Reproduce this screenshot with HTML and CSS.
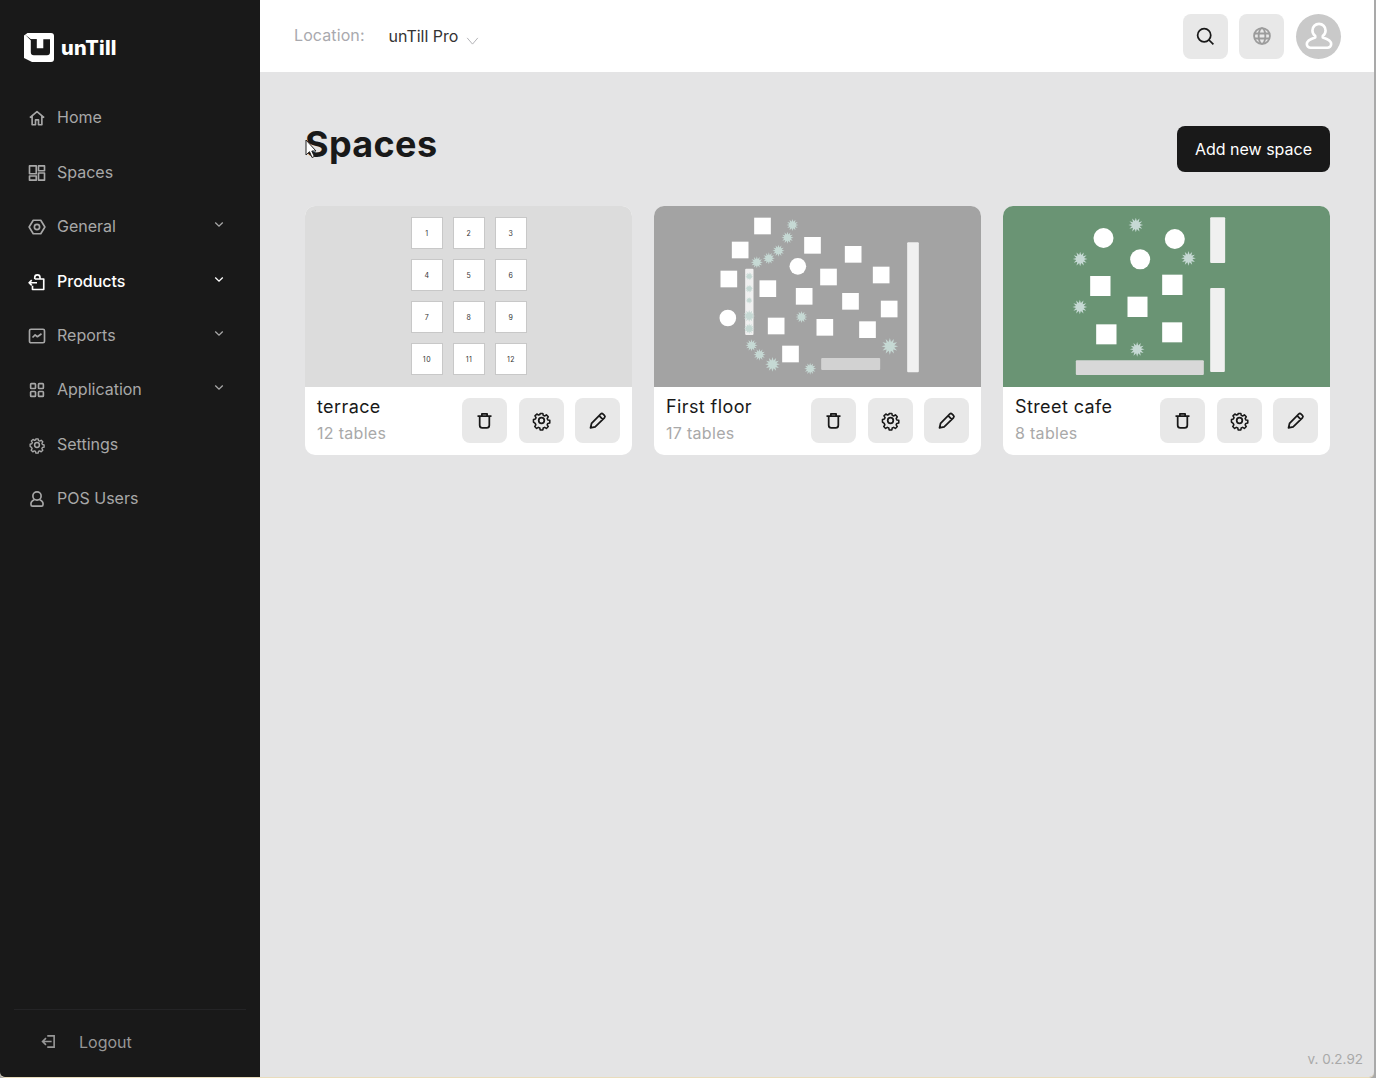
FILE: index.html
```html
<!DOCTYPE html>
<html lang="en">
<head>
<meta charset="utf-8">
<title>Spaces</title>
<link rel="stylesheet" href="styles.css">
</head>
<body>
<svg class="defs" width="0" height="0" aria-hidden="true">
  <symbol id="plant" viewBox="-10 -10 20 20" overflow="visible">
    <polygon fill="#c6d9d4" points="10,0 5.3,1.4 8.7,5 3.9,3.9 5,8.7 1.4,5.3 0,10 -1.4,5.3 -5,8.7 -3.9,3.9 -8.7,5 -5.3,1.4 -10,0 -5.3,-1.4 -8.7,-5 -3.9,-3.9 -5,-8.7 -1.4,-5.3 0,-10 1.4,-5.3 5,-8.7 3.9,-3.9 8.7,-5 5.3,-1.4"/>
  </symbol>
  <symbol id="i-trash" viewBox="0 0 24 24"><path d="M4 7h16M9 7V4.500h6V7M6.500 7v10.500a3 3 0 0 0 3 3h5a3 3 0 0 0 3-3V7" fill="none" stroke="currentColor" stroke-width="2" stroke-linejoin="round"/></symbol>
  <symbol id="i-gear" viewBox="0 0 24 24"><path d="M10.300 3h3.400l.5 2.500 1.800.8 2.200-1.400 2.400 2.400-1.400 2.200.8 1.800 2.500.5v3.400l-2.500.5-.8 1.800 1.400 2.200-2.400 2.400-2.200-1.400-1.800.8-.5 2.500h-3.400l-.5-2.500-1.800-.8-2.200 1.400-2.400-2.400 1.400-2.200-.8-1.800L1.800 14v-3.400l2.500-.5.8-1.800-1.400-2.200 2.400-2.400 2.200 1.400 1.800-.8z" transform="translate(12 12) scale(.9) translate(-12 -12)" fill="none" stroke="currentColor" stroke-width="2" stroke-linejoin="round"/><circle cx="12" cy="12" r="3.200" fill="none" stroke="currentColor" stroke-width="2"/></symbol>
  <symbol id="i-pen" viewBox="0 0 24 24"><path d="M4 20.500l1.200-5.200L15.600 4.600a2 2 0 0 1 2.800 0l1.500 1.500a2 2 0 0 1 0 2.800L9.300 19.400zM13.800 6.500l4.200 4.200" fill="none" stroke="currentColor" stroke-width="2" stroke-linejoin="round"/></symbol>
</svg>
<div class="app">
  <aside class="sidebar">
    <div class="logo">
      <svg class="logo-mark" viewBox="0 0 30 29" aria-hidden="true">
        <path fill="#fff" d="M3.500 0H27a3 3 0 0 1 3 3v23a3 3 0 0 1-3 3H8L0 25V2.500z"/>
        <path fill="#191919" d="M1 1.500L7 6.200h5.500v1H6.700z"/>
        <path fill="#191919" d="M6.800 6.300h6v9h6.500v-9H26v13a3 3 0 0 1-3 3H9.800a3 3 0 0 1-3-3z"/>
      </svg>
      <span class="logo-text">unTill</span>
    </div>
    <nav class="nav">
      <a class="nav-item">
        <svg class="nav-icon" viewBox="0 0 24 24"><path d="M2.500 11.500L12 3.500l9.500 8M5.500 9.500V21h4.500v-6.500h4V21h4.500V9.500"/></svg>
        <span>Home</span>
      </a>
      <a class="nav-item">
        <svg class="nav-icon" viewBox="0 0 24 24"><rect x="2" y="2.500" width="9" height="10.500"/><rect x="14" y="2.500" width="8" height="6.500"/><rect x="2" y="16" width="9" height="5.500"/><rect x="14" y="12" width="8" height="9.500"/></svg>
        <span>Spaces</span>
      </a>
      <a class="nav-item">
        <svg class="nav-icon" viewBox="0 0 24 24"><path d="M7 3h10l5.500 9-5.500 9H7l-5.500-9z"/><circle cx="12" cy="12" r="3.500"/></svg>
        <span>General</span>
        <svg class="nav-chev" viewBox="0 0 12 8"><path d="M1.500 1.500L6 6l4.500-4.500"/></svg>
      </a>
      <a class="nav-item is-active">
        <svg class="nav-icon" viewBox="0 0 24 24"><path d="M9 8V6a3.500 3.500 0 0 1 7 0v2M9 8h12v14H6v-5M1.500 13H12M5 9.500L1.500 13 5 16.500"/></svg>
        <span>Products</span>
        <svg class="nav-chev" viewBox="0 0 12 8"><path d="M1.500 1.500L6 6l4.500-4.500"/></svg>
      </a>
      <a class="nav-item">
        <svg class="nav-icon" viewBox="0 0 24 24"><rect x="2" y="3" width="20" height="18" rx="2"/><path d="M6 14l3.500-3.500 3 2.500L18 9"/></svg>
        <span>Reports</span>
        <svg class="nav-chev" viewBox="0 0 12 8"><path d="M1.500 1.500L6 6l4.500-4.500"/></svg>
      </a>
      <a class="nav-item">
        <svg class="nav-icon" viewBox="0 0 24 24"><rect x="3.500" y="3.500" width="6.500" height="6.500" rx="1"/><rect x="14" y="3.500" width="6.500" height="6.500" rx="1"/><rect x="3.500" y="14" width="6.500" height="6.500" rx="1"/><rect x="14" y="14" width="6.500" height="6.500" rx="1"/></svg>
        <span>Application</span>
        <svg class="nav-chev" viewBox="0 0 12 8"><path d="M1.500 1.500L6 6l4.500-4.500"/></svg>
      </a>
      <a class="nav-item">
        <svg class="nav-icon" viewBox="0 0 24 24"><use href="#i-gear"/></svg>
        <span>Settings</span>
      </a>
      <a class="nav-item">
        <svg class="nav-icon" viewBox="0 0 24 24"><circle cx="12" cy="8" r="5.500"/><path d="M8.500 13C5 14.500 3.500 17 4 19.500a2 2 0 0 0 2 2h12a2 2 0 0 0 2-2c.5-2.500-1-5-4.500-6.500"/></svg>
        <span>POS Users</span>
      </a>
    </nav>
    <div class="logout">
      <svg class="logout-icon" viewBox="0 0 24 24"><path d="M10 3h11v18H10M17 12H3M8 6.500L2.500 12 8 17.500"/></svg>
      <span>Logout</span>
    </div>
  </aside>
  <div class="content">
    <header class="topbar">
      <span class="loc-label">Location:</span>
      <span class="loc-value">unTill Pro</span>
      <svg class="loc-chev" viewBox="0 0 14 9"><path d="M1 1l6 7 6-7"/></svg>
      <button class="icon-btn search-btn" aria-label="Search">
        <svg viewBox="0 0 24 24"><circle cx="10.500" cy="10.500" r="7.500"/><path d="M16 16l5 5"/></svg>
      </button>
      <button class="icon-btn globe-btn" aria-label="Language">
        <svg viewBox="0 0 24 24"><circle cx="12" cy="12" r="9.500"/><ellipse cx="12" cy="12" rx="4" ry="9.500"/><path d="M3 9h18M3 15h18"/></svg>
      </button>
      <div class="avatar">
        <svg viewBox="0 0 32 32"><path d="M16 3a7 7 0 0 1 7 7c0 2.500-1.200 4.500-3 6v1.500c4 1.200 9 3.500 9 7 0 2.500-2 4-4 4H7c-2 0-4-1.500-4-4 0-3.500 5-5.800 9-7V16c-1.800-1.500-3-3.500-3-6a7 7 0 0 1 7-7z"/></svg>
      </div>
    </header>
    <main class="main">
      <div class="page-head">
        <h1 class="page-title">Spaces</h1>
        <button class="add-btn">Add new space</button>
      </div>
      <div class="cards">
        <article class="card">
          <div class="plan plan-terrace">
            <div class="table-grid">
              <span class="tbl">1</span><span class="tbl">2</span><span class="tbl">3</span>
              <span class="tbl">4</span><span class="tbl">5</span><span class="tbl">6</span>
              <span class="tbl">7</span><span class="tbl">8</span><span class="tbl">9</span>
              <span class="tbl">10</span><span class="tbl">11</span><span class="tbl">12</span>
            </div>
          </div>
          <div class="card-foot">
            <div class="card-info"><div class="card-name">terrace</div><div class="card-sub">12 tables</div></div>
            <button class="act" aria-label="Delete"><svg><use href="#i-trash"/></svg></button>
            <button class="act" aria-label="Settings"><svg><use href="#i-gear"/></svg></button>
            <button class="act" aria-label="Edit"><svg><use href="#i-pen"/></svg></button>
          </div>
        </article>
        <article class="card">
          <div class="plan plan-first">
            <svg class="plan-svg" viewBox="13 17 980 543">
              <g fill="#fff">
                <rect x="313" y="52" width="50" height="50"/><rect x="246" y="124" width="50" height="50"/><rect x="212" y="211" width="50" height="50"/><rect x="463" y="110" width="50" height="50"/><rect x="585" y="137" width="50" height="50"/><rect x="669" y="199" width="50" height="50"/><rect x="511" y="205" width="50" height="50"/><rect x="329" y="240" width="50" height="50"/><rect x="438" y="263" width="50" height="50"/><rect x="577" y="278" width="50" height="50"/><rect x="693" y="301" width="50" height="50"/><rect x="354" y="352" width="50" height="50"/><rect x="500" y="356" width="50" height="50"/><rect x="628" y="363" width="50" height="50"/><rect x="397" y="436" width="50" height="50"/>
                <circle cx="444" cy="198" r="25"/><circle cx="234" cy="353" r="25"/>
              </g>
              <rect x="772" y="126" width="35" height="390" rx="3" fill="#f0f0f0"/>
              <rect x="514" y="473" width="177" height="36" rx="3" fill="#d2d2d2"/>
              <rect x="286" y="205" width="25" height="199" rx="3" fill="#f0f0f0"/>
              <use href="#plant" x="410" y="56" width="36" height="36"/><use href="#plant" x="395" y="94" width="36" height="36"/><use href="#plant" x="368" y="133" width="36" height="36"/><use href="#plant" x="339" y="156" width="36" height="36"/><use href="#plant" x="303" y="168" width="36" height="36"/><use href="#plant" x="286" y="216" width="24" height="24"/><use href="#plant" x="286" y="253" width="24" height="24"/><use href="#plant" x="288" y="290" width="20" height="20"/><use href="#plant" x="280" y="329" width="36" height="36"/><use href="#plant" x="282" y="369" width="32" height="32"/><use href="#plant" x="287" y="417" width="36" height="36"/><use href="#plant" x="311" y="445" width="36" height="36"/><use href="#plant" x="346" y="470" width="44" height="44"/><use href="#plant" x="463" y="487" width="36" height="36"/><use href="#plant" x="437" y="332" width="36" height="36"/><use href="#plant" x="695" y="413" width="50" height="50"/>
            </svg>
          </div>
          <div class="card-foot">
            <div class="card-info"><div class="card-name">First floor</div><div class="card-sub">17 tables</div></div>
            <button class="act" aria-label="Delete"><svg><use href="#i-trash"/></svg></button>
            <button class="act" aria-label="Settings"><svg><use href="#i-gear"/></svg></button>
            <button class="act" aria-label="Edit"><svg><use href="#i-pen"/></svg></button>
          </div>
        </article>
        <article class="card">
          <div class="plan plan-street">
            <svg class="plan-svg" viewBox="10 17 980 543">
              <g fill="#fff">
                <circle cx="311" cy="113" r="30"/><circle cx="525" cy="116" r="30"/><circle cx="421" cy="177" r="30"/>
                <rect x="271" y="227" width="61" height="60"/><rect x="487" y="223" width="61" height="61"/><rect x="383" y="289" width="60" height="61"/><rect x="289" y="372" width="61" height="60"/><rect x="487" y="366" width="60" height="60"/>
              </g>
              <rect x="631" y="51" width="45" height="137" rx="3" fill="#f0f0f0"/>
              <rect x="631" y="263" width="44" height="252" rx="3" fill="#f0f0f0"/>
              <rect x="228" y="480" width="384" height="44" rx="3" fill="#d8d8d8"/>
              <use href="#plant" x="386" y="52" width="44" height="44"/><use href="#plant" x="219" y="154" width="44" height="44"/><use href="#plant" x="544" y="152" width="44" height="44"/><use href="#plant" x="218" y="298" width="44" height="44"/><use href="#plant" x="390" y="425" width="44" height="44"/>
            </svg>
          </div>
          <div class="card-foot">
            <div class="card-info"><div class="card-name">Street cafe</div><div class="card-sub">8 tables</div></div>
            <button class="act" aria-label="Delete"><svg><use href="#i-trash"/></svg></button>
            <button class="act" aria-label="Settings"><svg><use href="#i-gear"/></svg></button>
            <button class="act" aria-label="Edit"><svg><use href="#i-pen"/></svg></button>
          </div>
        </article>
      </div>
      <span class="version">v. 0.2.92</span>
      <svg class="cursor" viewBox="0 0 12 20" aria-hidden="true"><path d="M1 1v15l3.500-3.300 2.500 5.800 2.300-1-2.500-5.500H11z" fill="#fff" stroke="#222" stroke-width="1"/></svg>
    </main>
  </div>
</div>
</body>
</html>
```
FILE: styles.css
```css
* { box-sizing: border-box; }
html, body { height: 100%; }
body {
  margin: 0;
  background: #a9a9a9;
  font-family: Inter, "Liberation Sans", sans-serif;
  color: #191919;
  overflow: hidden;
}
.defs { position: absolute; }
.app {
  display: flex;
  width: 1374px;
  height: 1077px;
  border-radius: 0 0 5px 5px;
  overflow: hidden;
  box-shadow: 0 1px 0 #e9dcbc;
}
.sidebar {
  width: 260px;
  flex: none;
  background: #191919;
  display: flex;
  flex-direction: column;
  color: #a8a8a8;
}
.logo {
  display: flex;
  align-items: center;
  gap: 7px;
  height: 64px;
  margin-top: 15px;
  padding-left: 24px;
}
.logo-mark { width: 30px; height: 29px; flex: none; }
.logo-text {
  font-size: 20px;
  font-weight: 800;
  color: #fff;
  letter-spacing: 0.2px;
  margin-top: 2px;
}
.nav { display: flex; flex-direction: column; margin-top: 11.2px; }
.nav-item {
  display: flex;
  align-items: center;
  height: 54.4px;
  padding: 0 36px 0 28px;
  font-size: 16px;
  color: #a8a8a8;
}
.nav-item span { flex: 1; margin-left: 11px; }
.nav-item.is-active { color: #fff; font-weight: 500; }
.nav-icon {
  width: 18px;
  height: 18px;
  flex: none;
  fill: none;
  stroke: currentColor;
  stroke-width: 2.2;
  stroke-linejoin: round;
  margin-top: 2px;
}
.nav-chev {
  width: 10px;
  height: 7px;
  flex: none;
  fill: none;
  stroke: currentColor;
  stroke-width: 1.6;
  margin-top: -3px;
}
.logout {
  margin: auto 14px 0;
  height: 68px;
  border-top: 1px solid #242426;
  display: flex;
  align-items: center;
  padding: 0 0 4px 27px;
  gap: 23px;
  font-size: 16px;
  color: #979797;
}
.logout-icon {
  width: 15px;
  height: 15px;
  fill: none;
  stroke: currentColor;
  stroke-width: 2.6;
}
.content {
  flex: 1;
  display: flex;
  flex-direction: column;
  min-width: 0;
  background: #e4e4e5;
}
.topbar {
  height: 72px;
  flex: none;
  background: #fff;
  display: flex;
  align-items: center;
  padding: 0 33px 0 34px;
}
.loc-label { font-size: 16px; color: #a9a9ae; margin-top: -2px; letter-spacing: 0.1px; }
.loc-value { font-size: 16px; color: #333; margin-left: 24px; }
.loc-chev {
  width: 13px;
  height: 8px;
  fill: none;
  stroke: #a9a9ae;
  stroke-width: 1;
  margin: 9px auto 0 8px;
}
.icon-btn {
  width: 45px;
  height: 45px;
  border: 0;
  border-radius: 8px;
  background: #e8e8e8;
  padding: 0;
  display: flex;
  align-items: center;
  justify-content: center;
}
.search-btn { margin-right: 11px; }
.globe-btn { margin-right: 12px; }
.icon-btn svg { width: 20px; height: 20px; fill: none; stroke-width: 2; }
.search-btn svg { stroke: #191919; width: 21px; height: 21px; }
.globe-btn svg { stroke: #9c9c9c; stroke-width: 2.2; }
.avatar {
  width: 45px;
  height: 45px;
  border-radius: 50%;
  background: #c9c9c9;
  display: flex;
  align-items: center;
  justify-content: center;
}
.avatar svg { width: 30px; height: 30px; fill: none; stroke: #fff; stroke-width: 2.8; stroke-linejoin: round; }
.main {
  position: relative;
  flex: 1;
  padding: 54px 44px 0 45px;
}
.page-head {
  display: flex;
  align-items: flex-start;
  justify-content: space-between;
  height: 80px;
}
.page-title {
  margin: -1px 0 0;
  font-size: 36px;
  line-height: 38px;
  font-weight: 700;
  letter-spacing: 0.35px;
}
.add-btn {
  width: 153px;
  height: 46px;
  border: 0;
  border-radius: 8px;
  background: #191919;
  color: #fff;
  font: 400 16px Inter, "Liberation Sans", sans-serif;
}
.cards {
  display: grid;
  grid-template-columns: repeat(3, 327px);
  gap: 22px;
}
.card {
  height: 249px;
  border-radius: 10px;
  background: #fff;
  overflow: hidden;
}
.plan { height: 181px; }
.plan-terrace { background: #dcdcdc; padding: 11px 0 0 106px; }
.plan-first { background: #a3a3a3; }
.plan-street { background: #6a9474; }
.plan-svg { display: block; width: 327px; height: 181px; }
.table-grid {
  display: grid;
  grid-template-columns: repeat(3, 32px);
  grid-auto-rows: 32px;
  gap: 10px;
}
.tbl {
  display: flex;
  align-items: center;
  justify-content: center;
  background: #fff;
  border: 1px solid #c8c8c8;
  font-size: 7px;
  letter-spacing: 0.5px;
  color: #333;
}
.card-foot {
  display: flex;
  align-items: center;
  gap: 11.5px;
  height: 68px;
  padding: 0 12px 1px;
}
.card-info { flex: 1; min-width: 0; margin-top: -3px; }
.card-name { font-size: 18px; line-height: 24px; letter-spacing: 0.4px; color: #191919; }
.card-sub { font-size: 16px; line-height: 22px; letter-spacing: 0.3px; color: #a9a9a9; margin-top: 3px; }
.act {
  width: 45px;
  height: 45px;
  border: 0;
  border-radius: 8px;
  background: #e8e8e8;
  color: #191919;
  padding: 0;
  display: flex;
  align-items: center;
  justify-content: center;
  flex: none;
}
.act svg { width: 21px; height: 21px; }
.version {
  position: absolute;
  right: 11px;
  bottom: 10px;
  font-size: 13.5px;
  color: #a9a9a9;
}
.cursor {
  position: absolute;
  left: 45px;
  top: 67px;
  width: 12px;
  height: 20px;
}
```
